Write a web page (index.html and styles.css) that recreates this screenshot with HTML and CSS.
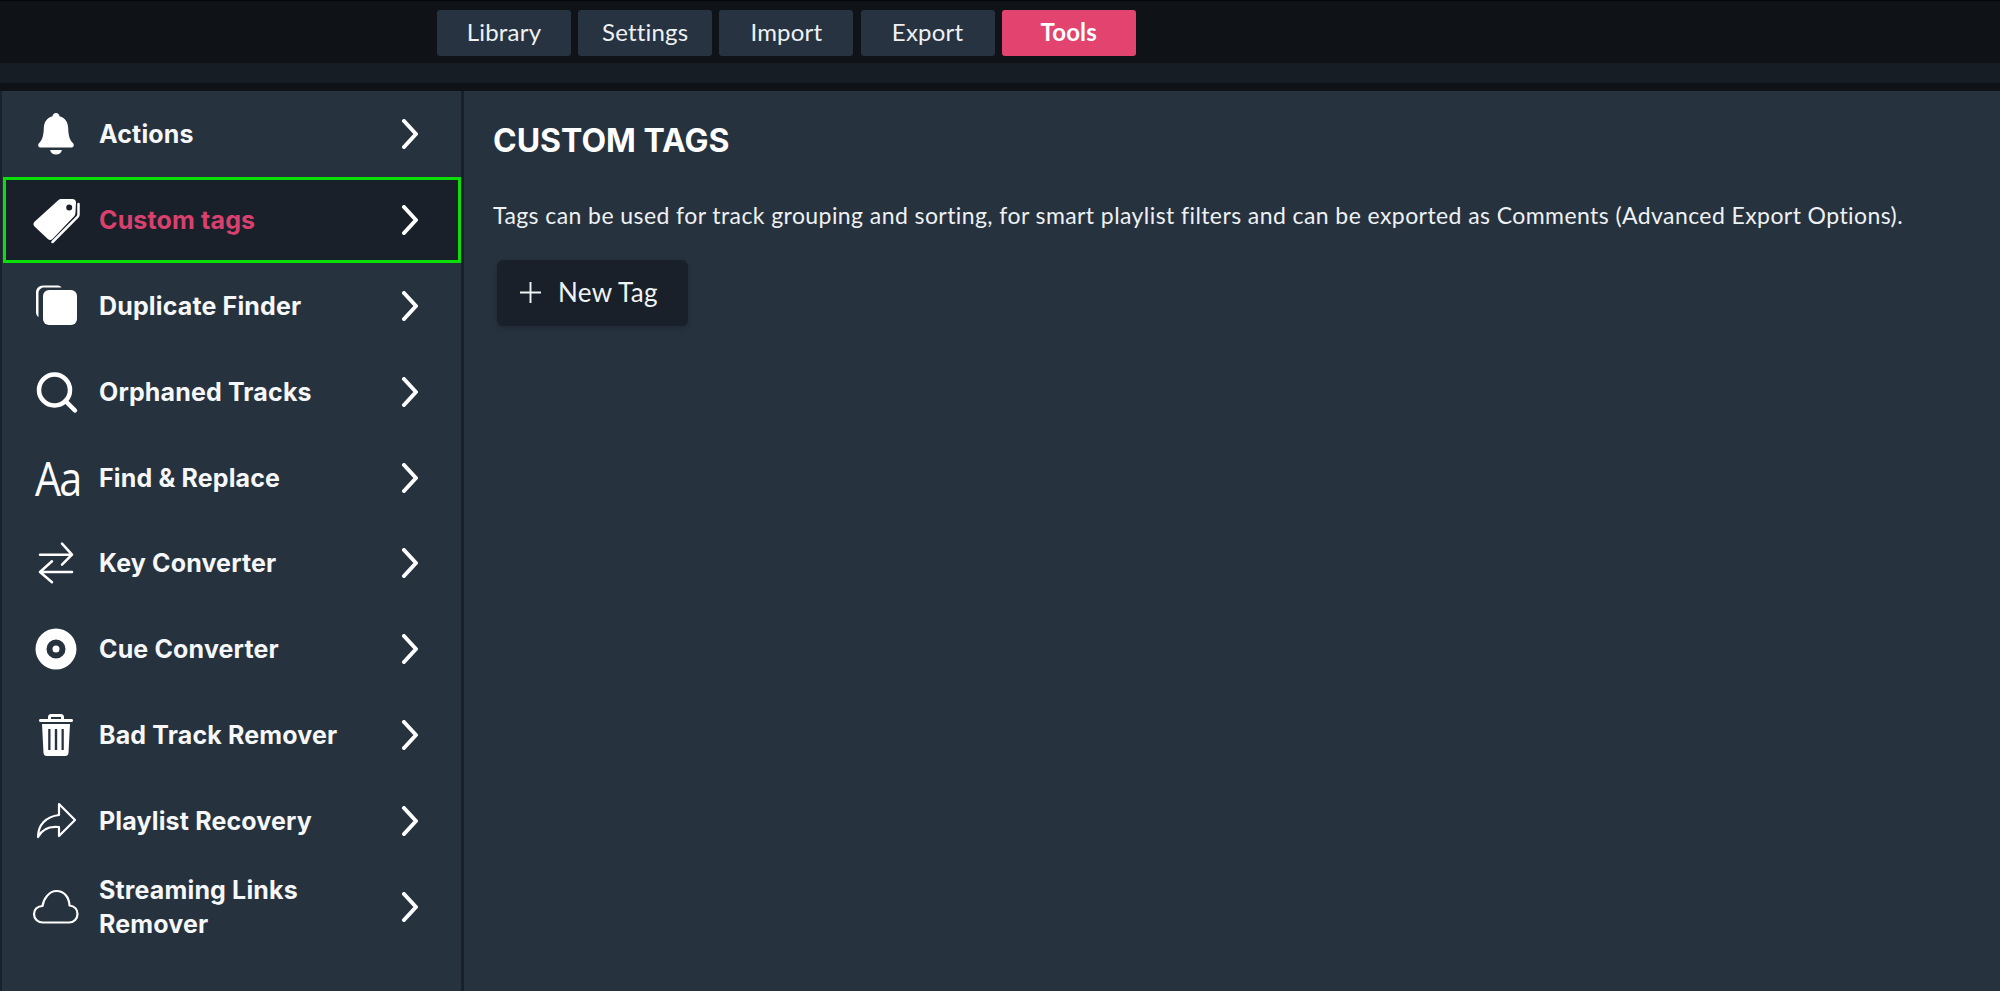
FILE: index.html
```html
<!DOCTYPE html>
<html lang="en">
<head>
    <meta charset="UTF-8">
    <meta name="viewport" content="width=device-width, initial-scale=1.0">
    <title>Custom Tags</title>
    <link rel="stylesheet" href="styles.css">
</head>
<body>
    <header class="topbar">
        <nav class="tabs">
            <a class="tab">Library</a>
            <a class="tab">Settings</a>
            <a class="tab">Import</a>
            <a class="tab">Export</a>
            <a class="tab tab-active">Tools</a>
        </nav>
    </header>
    <div class="strip"></div>

    <div class="layout">
        <aside class="sidebar">
            <div class="item">
                <svg class="icon" viewBox="0 0 48 48"><path class="fill" d="M24 3c2 0 3.300 1.400 3.500 3.200 6 1.500 8.500 6.200 8.700 12.300.2 6.500 1.300 11.200 4.600 14.600 1.500 1.500 1.400 4-1 4.400H8.200c-2.400-.4-2.500-2.900-1-4.400 3.300-3.400 4.400-8.100 4.600-14.600.2-6.100 2.700-10.800 8.700-12.300C20.700 4.400 22 3 24 3z"/><path class="fill" d="M18 40h12c-.8 3-3 4.600-6 4.600s-5.200-1.600-6-4.600z"/></svg>
                <span class="label">Actions</span>
                <svg class="chevron" viewBox="0 0 18 30"><path d="M3 2l12 13L3 28"/></svg>
            </div>
            <div class="item item-active">
                <svg class="icon" viewBox="0 0 48 48"><path class="fill" d="M29 3h11.500c2 0 3.500 1.500 3.500 3.500l-.6 11c0 1-.4 1.800-1 2.500L20.500 43c-1.400 1.400-3.300 1.400-4.700 0L2.500 30.500c-1.400-1.400-1.400-3.300 0-4.700L26.500 4c.7-.6 1.500-1 2.500-1zm8.200 5.500a3 3 0 1 0 0 6 3 3 0 0 0 0-6z" fill-rule="evenodd"/><path class="line" d="M46.500 8v10.500c0 1-.4 1.700-1 2.300L20.500 46"/></svg>
                <span class="label">Custom tags</span>
                <svg class="chevron" viewBox="0 0 18 30"><path d="M3 2l12 13L3 28"/></svg>
            </div>
            <div class="item">
                <svg class="icon" viewBox="0 0 48 48"><path class="fill" d="M11 3.500h14c2 0 3.500.6 4.500 2H12c-3 0-5.500 2.500-5.500 5.500v24C5 34 4 32.500 4 30V10.500c0-4 3-7 7-7z"/><rect class="fill" x="11" y="8" width="34" height="35" rx="6"/></svg>
                <span class="label">Duplicate Finder</span>
                <svg class="chevron" viewBox="0 0 18 30"><path d="M3 2l12 13L3 28"/></svg>
            </div>
            <div class="item">
                <svg class="icon" viewBox="0 0 48 48"><circle class="line thick" cx="22.500" cy="22" r="15.500"/><path class="line thick" d="M33.500 33L43 42.500"/></svg>
                <span class="label">Orphaned Tracks</span>
                <svg class="chevron" viewBox="0 0 18 30"><path d="M3 2l12 13L3 28"/></svg>
            </div>
            <div class="item">
                <span class="icon-text">Aa</span>
                <span class="label">Find &amp; Replace</span>
                <svg class="chevron" viewBox="0 0 18 30"><path d="M3 2l12 13L3 28"/></svg>
            </div>
            <div class="item">
                <svg class="icon" viewBox="0 0 48 48"><path class="line" d="M8 15.700h32M30 4.700l10 11-10 10"/><path class="line" d="M40 33H8M20 22.300L8 33l12 10.300"/></svg>
                <span class="label">Key Converter</span>
                <svg class="chevron" viewBox="0 0 18 30"><path d="M3 2l12 13L3 28"/></svg>
            </div>
            <div class="item">
                <svg class="icon" viewBox="0 0 48 48"><path class="fill" fill-rule="evenodd" d="M24 3.500a20.500 20.500 0 1 0 0 41 20.500 20.500 0 0 0 0-41zm0 11a9.500 9.500 0 1 1 0 19 9.500 9.500 0 0 1 0-19zm0 6a3.500 3.500 0 1 0 0 7 3.500 3.500 0 0 0 0-7z"/></svg>
                <span class="label">Cue Converter</span>
                <svg class="chevron" viewBox="0 0 18 30"><path d="M3 2l12 13L3 28"/></svg>
            </div>
            <div class="item">
                <svg class="icon" viewBox="0 0 48 48"><path class="fill" fill-rule="evenodd" d="M19 3h10c1.500 0 3 1.300 3 3v2h7.500c1 0 1.500.7 1.500 1.500s-.5 1.500-1.500 1.500h-31C7.500 11 7 10.300 7 9.500S7.500 8 8.500 8H16V6c0-1.700 1.500-3 3-3zm0 3v2h10V6zM10 13h28l-1.500 29c-.1 1.800-1.500 3-3.200 3H14.700c-1.700 0-3.100-1.200-3.200-3zm6.200 5v21h2.300V18zm6.600 0v21h2.400V18zm6.700 0v21h2.300V18z"/></svg>
                <span class="label">Bad Track Remover</span>
                <svg class="chevron" viewBox="0 0 18 30"><path d="M3 2l12 13L3 28"/></svg>
            </div>
            <div class="item">
                <svg class="icon" viewBox="0 0 48 48"><path class="line mid" d="M27 7l16 16-16 16v-9C18 29 10 32 6 40c0-12 8-20.500 21-22z"/></svg>
                <span class="label">Playlist Recovery</span>
                <svg class="chevron" viewBox="0 0 18 30"><path d="M3 2l12 13L3 28"/></svg>
            </div>
            <div class="item">
                <svg class="icon" viewBox="0 0 48 48"><path class="line mid" d="M11 39.500C5.500 39.500 2 35.500 2 31s3.500-8 8.500-8c1-7 6.500-15 14-15s12.500 6 13 14.500c5 .5 8 4 8 8.500s-3.500 8.500-8.500 8.500z"/></svg>
                <span class="label">Streaming Links<br>Remover</span>
                <svg class="chevron" viewBox="0 0 18 30"><path d="M3 2l12 13L3 28"/></svg>
            </div>
        </aside>

        <main class="content">
            <h1>CUSTOM TAGS</h1>
            <p>Tags can be used for track grouping and sorting, for smart playlist filters and can be exported as Comments (Advanced Export Options).</p>
            <button type="button" class="new-tag">
                <svg class="plus" viewBox="0 0 22 22"><path d="M11 0v22M0 11h22"/></svg>
                New Tag
            </button>
        </main>
    </div>
</body>
</html>
```

FILE: styles.css
```css
html, body {
    height: 100%;
}

body {
    margin: 0;
    display: flex;
    flex-direction: column;
    overflow: hidden;
    background-color: #27323f;
    color: #f5f7f9;
    font-family: Lato, sans-serif;
}

.topbar {
    height: 63px;
    padding: 9px 0 0 437px;
    box-sizing: border-box;
    background-color: #0f1216;
    border-top: 1px solid #050607;
}

.tabs {
    display: flex;
    gap: 7.200px;
}

.tab {
    width: 134px;
    height: 46px;
    padding-bottom: 3px;
    box-sizing: border-box;
    display: flex;
    align-items: center;
    justify-content: center;
    background-color: #273340;
    border-radius: 3px;
    font-size: 24px;
    letter-spacing: 0.2px;
    color: #eef1f4;
}

.tab-active {
    background-color: #e2446f;
    color: #ffffff;
    font-weight: 700;
}

.strip {
    height: 28px;
    box-sizing: border-box;
    background-color: #171d25;
    border-bottom: 8px solid #0f1318;
}

.layout {
    flex: 1;
    display: flex;
}

.sidebar {
    width: 464px;
    box-sizing: border-box;
    background-color: #27323f;
    border-left: 2px solid #1a222b;
    border-right: 3px solid #1a2028;
}

.item {
    height: 85.900px;
    box-sizing: border-box;
    padding: 0 42px 0 30px;
    display: flex;
    align-items: center;
    font-family: Inter, sans-serif;
    font-size: 25px;
    font-weight: 700;
    letter-spacing: 0.150px;
    line-height: 34px;
    color: #f5f7f9;
}

.item-active {
    margin-left: 1px;
    padding: 0 39px 0 26px;
    background-color: #1a202a;
    border: 3px solid #0adf0a;
    color: #d9406e;
}

.icon {
    width: 48px;
    height: 48px;
    flex: none;
}

.icon-text {
    width: 48px;
    flex: none;
    text-align: center;
    font-family: "Open Sans", sans-serif;
    font-size: 47px;
    font-weight: 400;
    letter-spacing: -2px;
    transform: scaleX(0.88);
    color: #ffffff;
}

.fill {
    fill: #ffffff;
}

.line {
    fill: none;
    stroke: #ffffff;
    stroke-width: 2.500;
    stroke-linecap: round;
    stroke-linejoin: round;
}

.mid {
    stroke-width: 2.200;
}

.thick {
    stroke-width: 4.500;
}

.label {
    flex: 1;
    margin-left: 19px;
}

.chevron {
    width: 18px;
    height: 30px;
    flex: none;
    fill: none;
    stroke: #ffffff;
    stroke-width: 4;
    stroke-linecap: round;
    stroke-linejoin: round;
}

.content {
    flex: 1;
    padding: 30px 29px;
}

h1 {
    margin: 0;
    font-family: Inter, sans-serif;
    font-size: 32px;
    font-weight: 700;
    line-height: 40px;
    color: #ffffff;
}

p {
    margin: 39px 0 0;
    font-size: 23px;
    letter-spacing: 0.420px;
    line-height: 30px;
    white-space: nowrap;
    color: #eef1f4;
}

.new-tag {
    margin: 30px 0 0 4px;
    width: 191px;
    height: 66px;
    padding: 0 0 2px 23px;
    display: flex;
    align-items: center;
    gap: 17px;
    border: none;
    border-radius: 6px;
    background-color: #1a2029;
    box-shadow: 0 2px 5px rgba(0, 0, 0, 0.2);
    font-family: Lato, sans-serif;
    font-size: 26px;
    letter-spacing: 0.300px;
    color: #f0f3f5;
}

.plus {
    width: 21px;
    height: 21px;
    fill: none;
    stroke: #f0f3f5;
    stroke-width: 2;
}
```
